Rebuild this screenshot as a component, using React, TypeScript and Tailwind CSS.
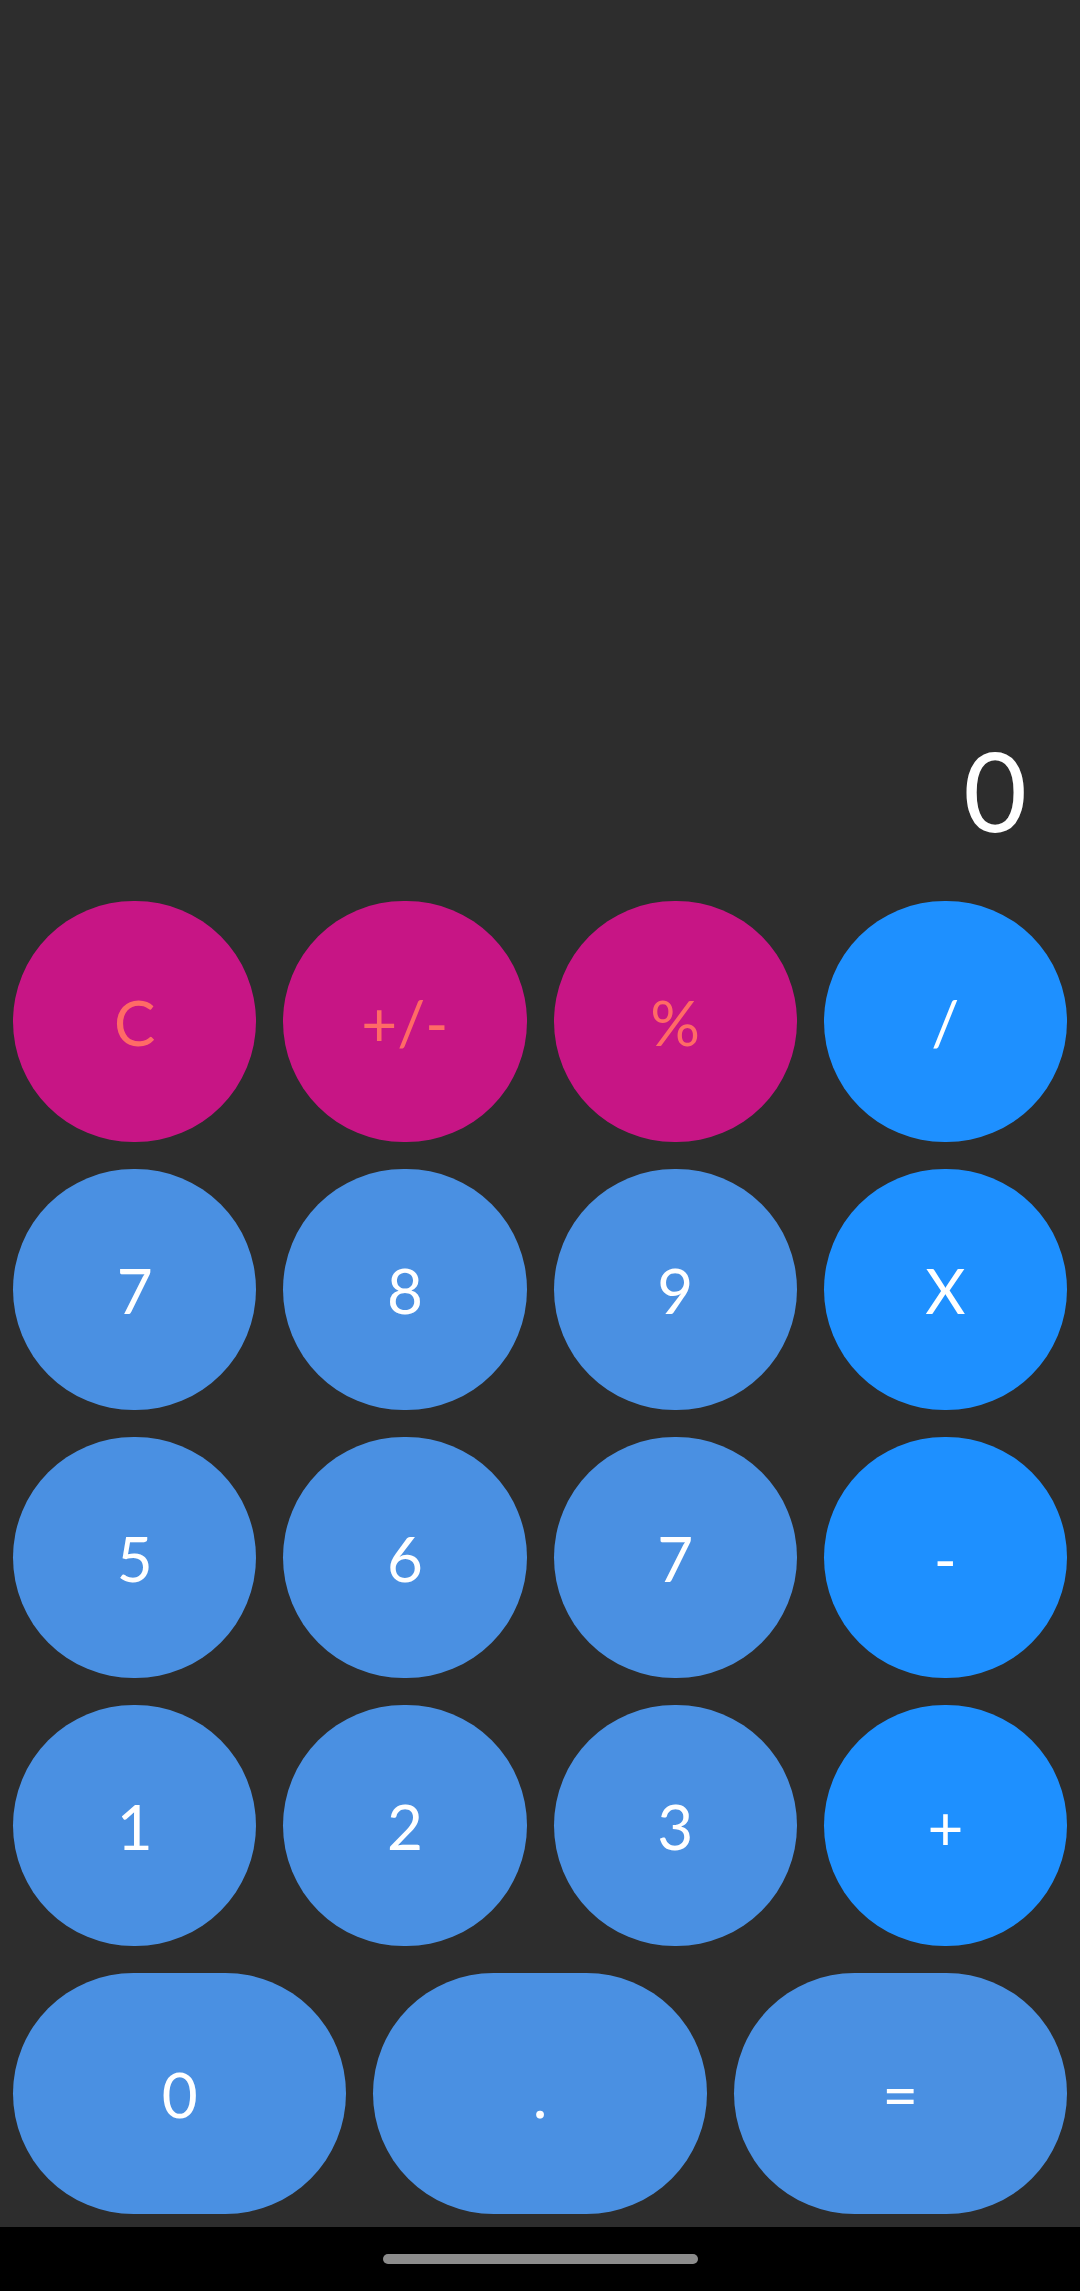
import React from "react";

type Key = {
  label: string;
  kind: "fn" | "op" | "num";
};

const ROWS: Key[][] = [
  [
    { label: "C", kind: "fn" },
    { label: "+/-", kind: "fn" },
    { label: "%", kind: "fn" },
    { label: "/", kind: "op" },
  ],
  [
    { label: "7", kind: "num" },
    { label: "8", kind: "num" },
    { label: "9", kind: "num" },
    { label: "X", kind: "op" },
  ],
  [
    { label: "5", kind: "num" },
    { label: "6", kind: "num" },
    { label: "7", kind: "num" },
    { label: "-", kind: "op" },
  ],
  [
    { label: "1", kind: "num" },
    { label: "2", kind: "num" },
    { label: "3", kind: "num" },
    { label: "+", kind: "op" },
  ],
];

const BOTTOM = ["0", ".", "="];

function keyClass(kind: Key["kind"]) {
  if (kind === "fn") return "bg-[#c71585] text-[#ff6b66]";
  if (kind === "op") return "bg-[#1e90ff] text-white";
  return "bg-[#4a90e2] text-white";
}

function CalcKey({ label, kind }: Key) {
  return (
    <button
      type="button"
      className={`flex h-[241px] items-center justify-center rounded-full text-[62px] leading-none ${keyClass(kind)}`}
    >
      {label}
    </button>
  );
}

export default function App() {
  return (
    <div
      className="flex h-[2291px] w-[1080px] flex-col bg-[#2d2d2d]"
      style={{ fontFamily: "Lato, 'Open Sans', sans-serif" }}
    >
      <div className="flex flex-1 items-end justify-end pb-[57px] pr-[53px]">
        <span className="text-[110px] leading-none text-white">0</span>
      </div>

      <div className="flex flex-col gap-[27px] px-[13px] pb-[13px]">
        {ROWS.map((row, i) => (
          <div key={i} className="grid grid-cols-4 gap-[27px]">
            {row.map((k, j) => (
              <CalcKey key={j} label={k.label} kind={k.kind} />
            ))}
          </div>
        ))}
        <div className="grid grid-cols-3 gap-[27px]">
          {BOTTOM.map((label) => (
            <CalcKey key={label} label={label} kind="num" />
          ))}
        </div>
      </div>

      <div className="flex h-[64px] items-start justify-center bg-black pt-[27px]">
        <div className="h-[10px] w-[315px] rounded-full bg-[#8c8c8c]" />
      </div>
    </div>
  );
}
